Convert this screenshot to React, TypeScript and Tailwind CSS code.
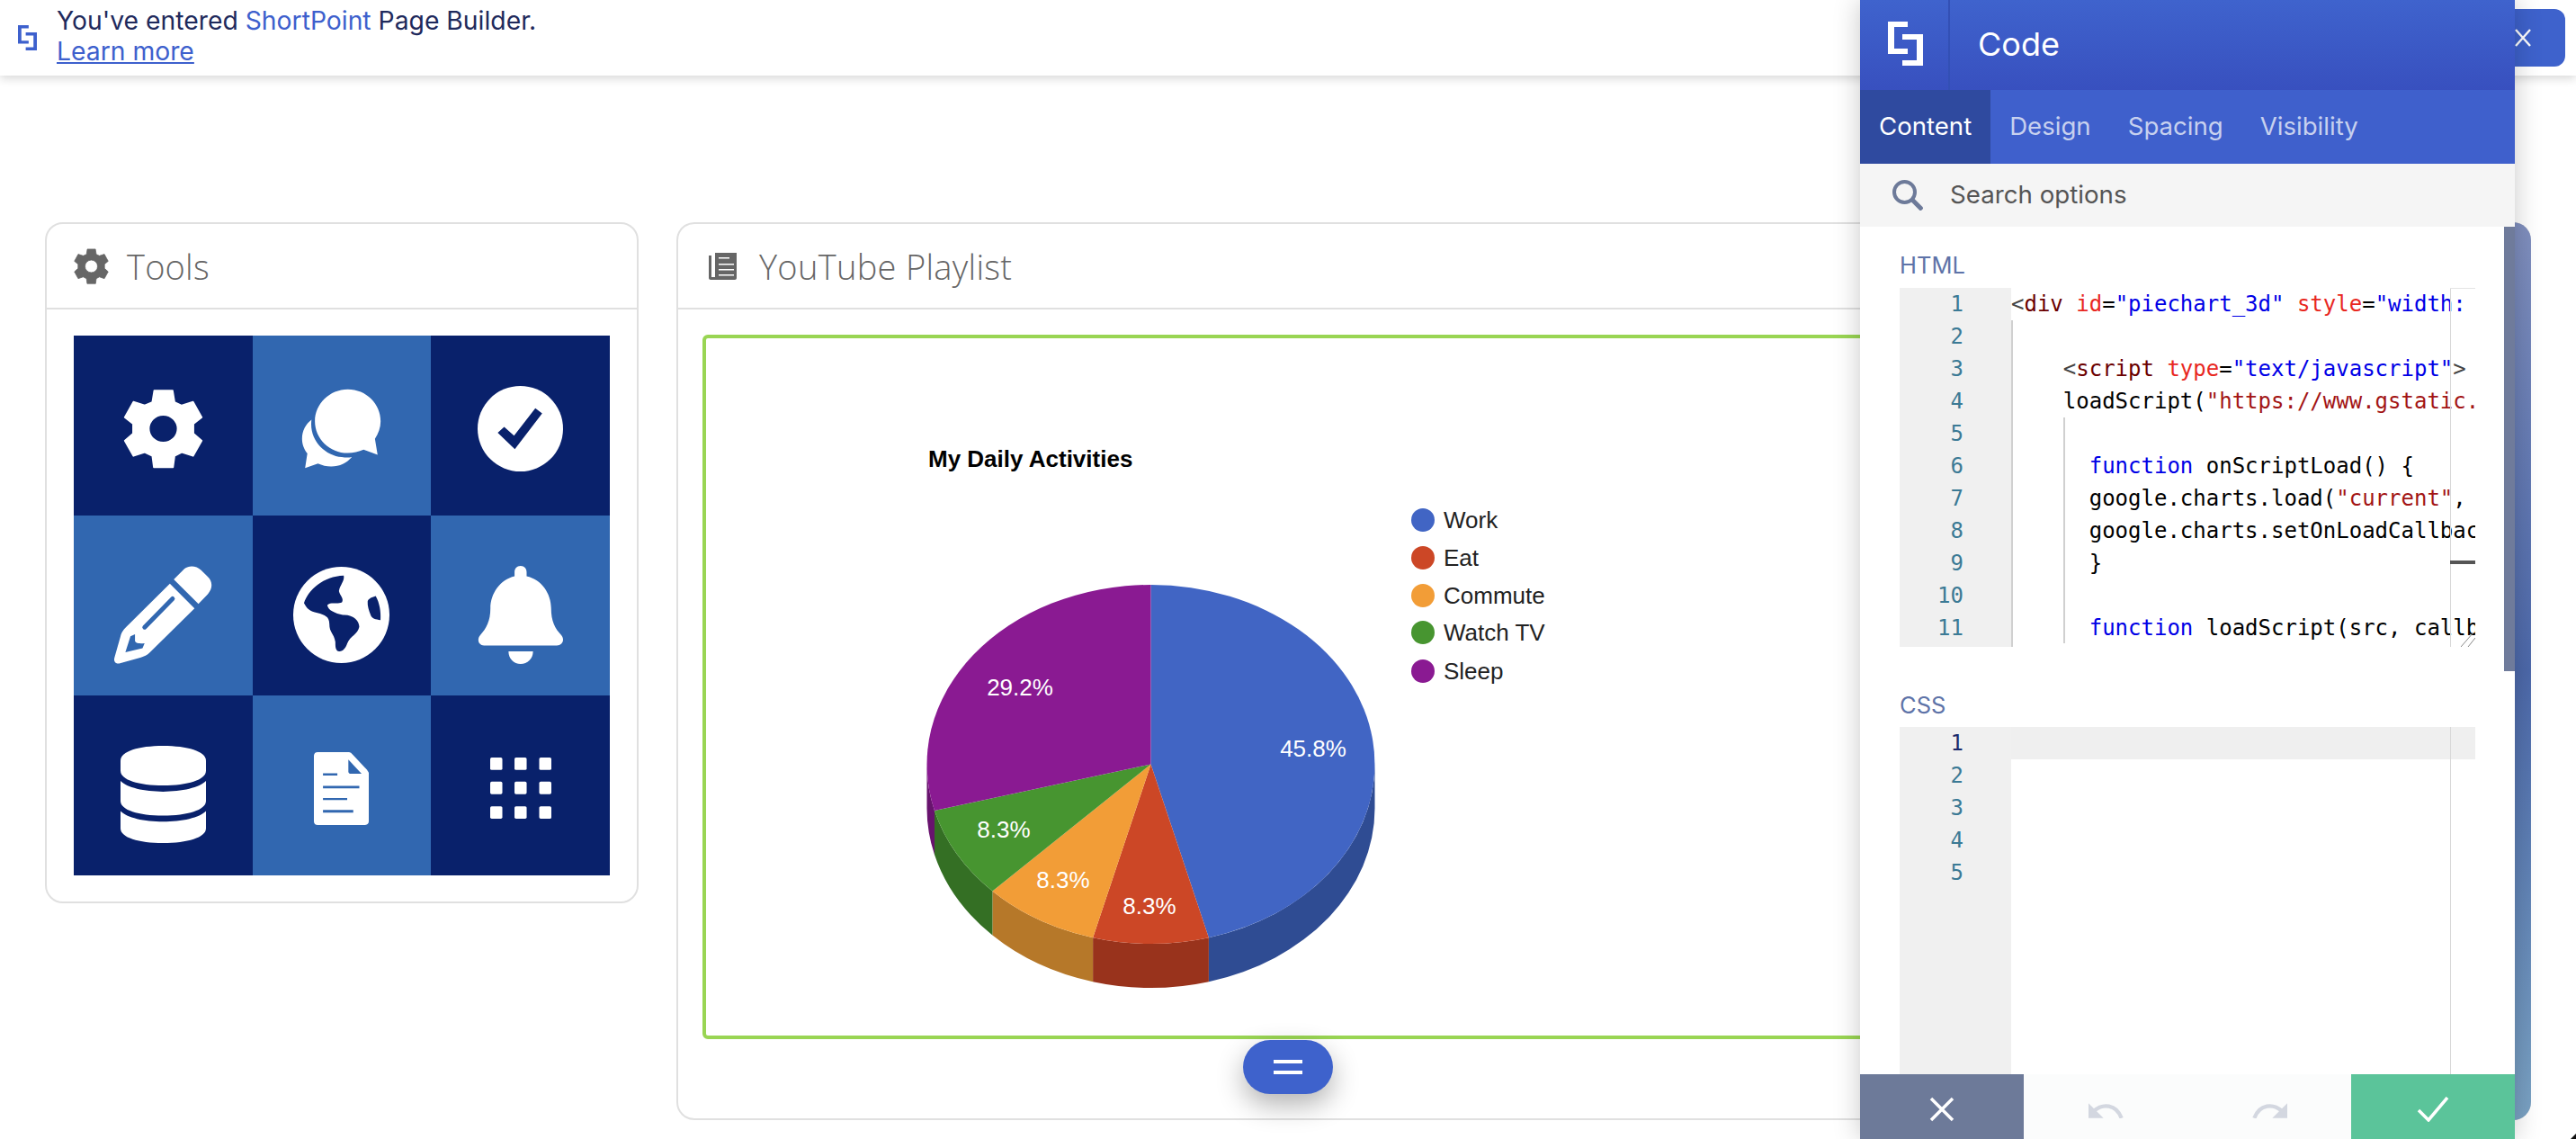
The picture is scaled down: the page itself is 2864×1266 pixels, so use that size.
const INTER = "font-['Inter',sans-serif]"
const MONO = "font-['DejaVu_Sans_Mono',monospace]"

// gear shared by the Tools title and the first tile
function Gear({ className }: { className: string }) {
  return (
    <svg viewBox="205 175 212 220" preserveAspectRatio="none" className={className} fill="currentColor">
      <path
        fillRule="evenodd"
        stroke="currentColor"
        strokeWidth="4"
        strokeLinejoin="round"
        d="M287 180H336L341 212L360 221L390 211L413 254L391 272V298L413 318L390 360L360 350L341 360L337 391H286L282 360L262 350L232 360L209 318L231 298V272L209 254L232 211L262 221L282 212ZM311 247A38 38 0 1 0 311 323A38 38 0 1 0 311 247Z"
      />
    </svg>
  )
}

function Logo({ className }: { className: string }) {
  return (
    <svg viewBox="0 0 39 49" preserveAspectRatio="none" className={className} fill="currentColor">
      <path d="M0 0H22V6H7V30H22V36H0Z" />
      <path d="M16 14H39V49H16V43H32V20H16Z" />
    </svg>
  )
}

function Chat() {
  return (
    <svg viewBox="678 175 212 219" preserveAspectRatio="none" className="w-[89px] h-[89px]" fill="currentColor">
      <path d="M801 177C850 177 888 217 888 264C888 282 882 298 873 312L880 356L843 342C830 348 816 351 801 351C753 351 714 312 714 264C714 217 753 177 801 177Z" />
      <path d="M705 260C690 272 680 290 680 312C680 328 686 342 694 352L688 392L722 380C733 385 745 388 757 388C780 388 798 378 812 362C805 364 795 364 785 362C740 358 698 315 705 260Z" />
    </svg>
  )
}

function CheckCircle() {
  return (
    <svg viewBox="1142 168 225 234" preserveAspectRatio="none" className="w-[95px] h-[95px]">
      <ellipse cx="1254.5" cy="285" rx="112.5" ry="117" fill="#fff" />
      <path d="M1195 296L1212 280L1238 304L1294 229L1312 243L1240 341Z" fill="#09216b" />
    </svg>
  )
}

function Pencil() {
  return (
    <svg viewBox="48 38 332 332" className="w-[111px] h-[111px]" fill="#fff">
      <path d="M249 86L285 50C300 38 325 40 340 55L362 77C378 93 380 115 362 135L331 167Z" />
      <path d="M236 100L318 182L170 328C160 338 150 342 140 345L70 365C55 368 48 358 52 345L72 275C75 260 85 250 95 240Z" />
      <path d="M245 150L152 245" stroke="#3167b0" strokeWidth="15" strokeLinecap="round" />
      <path d="M88 328L105 275L120 268V290C122 297 130 300 152 298L145 315Z" fill="#3167b0" />
    </svg>
  )
}

function Globe() {
  return (
    <svg viewBox="649 44 322 322" className="w-[107px] h-[107px]">
      <circle cx="810" cy="205" r="161" fill="#fff" />
      <path
        fill="#09216b"
        d="M818 73C822 90 805 105 802 125C805 140 820 150 812 163C795 170 775 160 763 172C765 190 790 200 815 205C850 203 870 225 870 245C865 270 840 275 830 300C825 315 815 328 803 327C790 325 790 310 790 295C785 265 770 265 770 235C770 210 755 205 730 198C705 193 695 185 685 165C700 120 750 75 818 73Z"
      />
      <path fill="#09216b" d="M925 142C938 165 943 195 941 222C925 220 912 218 908 205C902 190 897 175 898 160C900 150 915 145 925 142Z" />
    </svg>
  )
}

function Bell() {
  return (
    <svg viewBox="1140 660 229 266" preserveAspectRatio="none" className="w-[96px] h-[109px]" fill="#fff">
      <path d="M1254 660C1264 660 1270 667 1270 677V688C1310 697 1335 735 1335 775C1335 810 1345 830 1362 848C1372 860 1365 876 1350 876H1157C1143 876 1137 860 1147 848C1163 830 1174 810 1174 775C1174 735 1200 697 1238 688V677C1238 667 1244 660 1254 660Z" />
      <path d="M1222 892H1287C1287 912 1272 926 1254 926C1236 926 1222 912 1222 892Z" />
    </svg>
  )
}

function Database() {
  return (
    <svg viewBox="199 1150 225 265" preserveAspectRatio="none" className="w-[95px] h-[108px]" fill="#fff">
      <path d="M311 1150C375 1150 424 1165 424 1190V1218C424 1243 375 1258 311 1258C247 1258 199 1243 199 1218V1190C199 1165 247 1150 311 1150Z" />
      <path d="M199 1246C215 1264 262 1275 311 1275C360 1275 408 1264 424 1246V1300C424 1325 375 1340 311 1340C247 1340 199 1325 199 1300Z" />
      <path d="M199 1328C215 1346 262 1357 311 1357C360 1357 408 1346 424 1328V1375C424 1400 375 1415 311 1415C247 1415 199 1400 199 1375Z" />
    </svg>
  )
}

function Doc() {
  return (
    <svg viewBox="712 1166 145 199" preserveAspectRatio="none" className="w-[61px] h-[81px]">
      <path fill="#fff" d="M722 1166H805L810 1168L852 1214L857 1222V1355C857 1361 852 1365 846 1365H722C716 1365 712 1361 712 1355V1176C712 1170 716 1166 722 1166Z" />
      <path fill="#3167b0" d="M803 1186L838 1225H810C805 1225 803 1222 803 1218Z" />
      <path fill="#3167b0" d="M736 1224H774V1230H736ZM736 1258H832V1265H736ZM736 1291H800V1297H736ZM736 1324H816V1331H736Z" />
    </svg>
  )
}

function Dots() {
  const xs = [1174, 1238, 1303]
  const ys = [1182, 1248, 1315]
  return (
    <svg viewBox="1174 1182 161 167" preserveAspectRatio="none" className="w-[68px] h-[68px]" fill="#fff">
      {ys.map((y) => xs.map((x) => <rect key={`${x}-${y}`} x={x} y={y} width="32" height="34" rx="4" />))}
    </svg>
  )
}

const tiles = [
  { bg: 'bg-[#09216b]', pad: 'pt-[6px]', icon: <Gear className="w-[89px] h-[89px]" /> },
  { bg: 'bg-[#3167b0]', pad: 'pt-[6px]', icon: <Chat /> },
  { bg: 'bg-[#09216b]', pad: 'pt-[6px]', icon: <CheckCircle /> },
  { bg: 'bg-[#3167b0]', pad: 'pt-[20px]', icon: <Pencil /> },
  { bg: 'bg-[#09216b]', pad: 'pt-[20px]', icon: <Globe /> },
  { bg: 'bg-[#3167b0]', pad: 'pt-[20px]', icon: <Bell /> },
  { bg: 'bg-[#09216b]', pad: 'pt-[20px]', icon: <Database /> },
  { bg: 'bg-[#3167b0]', pad: 'pt-[6px]', icon: <Doc /> },
  { bg: 'bg-[#09216b]', pad: 'pt-[6px]', icon: <Dots /> },
]

function PieChart() {
  const sans = 'Liberation Sans, Arial, sans-serif'
  const legend = [
    ['Work', '#4165c4', 578],
    ['Eat', '#cc4726', 620],
    ['Commute', '#f29d37', 662],
    ['Watch TV', '#479530', 703],
    ['Sleep', '#8a1a92', 746],
  ] as const
  const labels = [
    ['45.8%', 1460, 841],
    ['29.2%', 1134, 773],
    ['8.3%', 1116, 931],
    ['8.3%', 1182, 987],
    ['8.3%', 1278, 1016],
  ] as const
  return (
    <svg viewBox="785 376 1000 775" className="w-[1000px] h-[775px]">
      <path fill="#2f4c93" d="M1528.5 849.5A249 199.5 0 0 1 1343.9 1042.2V1091.2A249 199.5 0 0 0 1528.5 898.5Z" />
      <path fill="#99331c" d="M1343.9 1042.2A249 199.5 0 0 1 1215.1 1042.2V1091.2A249 199.5 0 0 0 1343.9 1091.2Z" />
      <path fill="#b67829" d="M1215.1 1042.2A249 199.5 0 0 1 1103.4 990.5V1039.5A249 199.5 0 0 0 1215.1 1091.2Z" />
      <path fill="#346f24" d="M1103.4 990.5A249 199.5 0 0 1 1039 901.1V950.1A249 199.5 0 0 0 1103.4 1039.5Z" />
      <path fill="#68136e" d="M1039 901.1A249 199.5 0 0 1 1030.5 849.5V898.5A249 199.5 0 0 0 1039 950.1Z" />
      <path fill="#4165c4" d="M1279.5 849.5V650A249 199.5 0 0 1 1343.9 1042.2Z" />
      <path fill="#cc4726" d="M1279.5 849.5L1343.9 1042.2A249 199.5 0 0 1 1215.1 1042.2Z" />
      <path fill="#f29d37" d="M1279.5 849.5L1215.1 1042.2A249 199.5 0 0 1 1103.4 990.5Z" />
      <path fill="#479530" d="M1279.5 849.5L1103.4 990.5A249 199.5 0 0 1 1039 901.1Z" />
      <path fill="#8a1a92" d="M1279.5 849.5L1039 901.1A249 199.5 0 0 1 1279.5 650Z" />
      <text x="1032" y="519" fontFamily={sans} fontSize="26" fontWeight="700" fill="#000">
        My Daily Activities
      </text>
      {legend.map(([name, color, y]) => (
        <g key={name}>
          <circle cx="1582" cy={y} r="13" fill={color} />
          <text x="1605" y={y + 9} fontFamily={sans} fontSize="26" fill="#222">
            {name}
          </text>
        </g>
      ))}
      {labels.map(([text, x, y], i) => (
        <text key={i} x={x} y={y} textAnchor="middle" fontFamily={sans} fontSize="26" fill="#fff">
          {text}
        </text>
      ))}
    </svg>
  )
}

const K = 'text-[#0000e6]'
const S = 'text-[#a31515]'
const T = 'text-[#6b0000]'
const A = 'text-[#e8281f]'
const htmlLines: [string, string][][] = [
  [['<', 'text-[#444]'], ['div', T], [' ', ''], ['id', A], ['=', ''], ['"piechart_3d"', K], [' ', ''], ['style', A], ['=', ''], ['"width: 900px"', K]],
  [],
  [['    <', 'text-[#444]'], ['script', T], [' ', ''], ['type', A], ['=', ''], ['"text/javascript"', K], ['>', 'text-[#444]']],
  [['    loadScript(', ''], ['"https://www.gstatic.com/charts/loader.js"', S]],
  [],
  [['      ', ''], ['function', K], [' onScriptLoad() {', '']],
  [['      google.charts.load(', ''], ['"current"', S], [', {packages:', '']],
  [['      google.charts.setOnLoadCallback(drawChart);', '']],
  [['      }', '']],
  [],
  [['      ', ''], ['function', K], [' loadScript(src, callback) {', '']],
]

function Editor({ lines, count, active }: { lines: [string, string][][]; count: number; active?: boolean }) {
  return (
    <div className={`relative flex w-[640px] text-[24px] leading-[36px] ${MONO} ${active ? 'h-[500px]' : 'h-[399px]'}`}>
      <div className="w-[124px] bg-[#f0f0f0] pr-[53px] text-right text-[#3b7a95] shrink-0">
        {Array.from({ length: count }, (_, i) => (
          <div key={i} className={`h-[36px] ${active && i === 0 ? 'text-[#1b2a6b]' : ''}`}>
            {i + 1}
          </div>
        ))}
      </div>
      <div className="relative flex-1 overflow-hidden text-black">
        {active && <div className="h-[36px] bg-[#efefef]" />}
        {!active && <div className="absolute left-0 top-[36px] bottom-0 w-[2px] bg-[#d0d0d0]" />}
        {!active && <div className="absolute left-[58px] top-[144px] bottom-[4px] w-[2px] bg-[#d0d0d0]" />}
        {lines.map((line, i) => (
          <div key={i} className="h-[36px] whitespace-pre">
            {line.map(([text, color], j) => (
              <span key={j} className={color}>
                {text}
              </span>
            ))}
          </div>
        ))}
        <div className="absolute left-[488px] top-0 bottom-0 w-[1px] bg-[#d8d8d8]" />
        {!active && <div className="absolute left-[488px] top-0 right-0 h-[1px] bg-[#e4e4e4]" />}
        {!active && <div className="absolute left-[488px] top-[303px] right-0 h-[4px] bg-[#555]" />}
        {!active && (
          <svg viewBox="0 0 16 16" className="absolute right-0 bottom-0 w-[16px] h-[16px]" stroke="#888" fill="none">
            <path d="M0 16L14 0M8 16L16 6" />
          </svg>
        )}
      </div>
    </div>
  )
}

function SidePanel() {
  return (
    <div className={`absolute top-0 left-[2068px] flex h-[1266px] w-[728px] flex-col bg-white shadow-[0_0_28px_rgba(0,0,0,0.22)] ${INTER}`}>
      <div className="flex h-[100px] shrink-0 items-center bg-gradient-to-b from-[#3f63cd] to-[#3850bf] text-white">
        <div className="flex h-full w-[100px] items-center pl-[31px] border-r-2 border-[#3350b5]">
          <Logo className="w-[39px] h-[49px] text-white mb-[4px]" />
        </div>
        <span className="pl-[31px] pb-[2px] text-[36px]">Code</span>
      </div>
      <div className="flex h-[82px] shrink-0 bg-[#3f60cc] text-[27.6px] text-[#c7d1ef]">
        <div className="flex items-center bg-[#2f4a9f] px-[21px] text-white">Content</div>
        <div className="flex items-center pl-[21px]">Design</div>
        <div className="flex items-center pl-[41px]">Spacing</div>
        <div className="flex items-center pl-[41px]">Visibility</div>
      </div>
      <div className="flex h-[70px] shrink-0 items-center bg-[#f5f5f5] pl-[36px] text-[27.7px] text-[#555]">
        <svg viewBox="0 0 34 34" className="w-[34px] h-[34px]" fill="none" stroke="#6d7a99">
          <circle cx="13.5" cy="13.5" r="11.5" strokeWidth="4" />
          <path d="M22 22L33 33" strokeWidth="5" />
        </svg>
        <span className="pl-[30px]">Search options</span>
      </div>
      <div className="relative flex-1 overflow-hidden pl-[44px] pt-[25px]">
        <div className="text-[25.5px] leading-[36px] text-[#5e73a8] mb-[7px]">HTML</div>
        <Editor lines={htmlLines} count={11} />
        <div className="mt-[47px] text-[25.5px] leading-[36px] text-[#5e73a8] mb-[6px]">CSS</div>
        <Editor lines={[]} count={5} active />
        <div className="absolute right-0 top-0 h-[494px] w-[12px] bg-[#6f7b9b]" />
      </div>
      <div className="flex h-[72px] shrink-0 bg-[#fbfcfc]">
        <button className="flex w-[182px] items-center justify-center bg-[#6d7a99] pt-[6px]">
          <svg viewBox="0 0 28 28" className="w-[28px] h-[28px]" stroke="#fff" strokeWidth="3.5">
            <path d="M2 2L26 26M26 2L2 26" />
          </svg>
        </button>
        <div className="flex flex-1 items-center justify-around pt-[9px]">
          <svg viewBox="63 108 117 50" className="w-[39px] h-[17px]">
            <path d="M63 108L113 158H63Z" fill="#d3d7e0" />
            <path d="M80 135C110 108 155 110 173 158" fill="none" stroke="#d3d7e0" strokeWidth="13" />
          </svg>
          <svg viewBox="63 108 117 50" className="w-[39px] h-[17px] -scale-x-100">
            <path d="M63 108L113 158H63Z" fill="#d3d7e0" />
            <path d="M80 135C110 108 155 110 173 158" fill="none" stroke="#d3d7e0" strokeWidth="13" />
          </svg>
        </div>
        <button className="flex w-[182px] items-center justify-center bg-[#5bc49a] pt-[6px]">
          <svg viewBox="0 0 36 28" className="w-[36px] h-[28px]" fill="none" stroke="#fff" strokeWidth="3.5">
            <path d="M2 15L13 26L34 1" />
          </svg>
        </button>
      </div>
    </div>
  )
}

export default function App() {
  return (
    <div className={`relative w-[2864px] h-[1266px] overflow-hidden bg-white ${INTER}`}>
      <header className="flex h-[84px] items-center bg-white pl-[20px] shadow-[0_3px_10px_rgba(0,0,0,0.16)]">
        <Logo className="w-[21px] h-[28px] text-[#3d60cd]" />
        <div className="pl-[22px] pb-[4px] text-[28.3px] leading-[34px] text-[#1f2a5c]">
          <div>
            You've entered <span className="text-[#3d60cd]">ShortPoint</span> Page Builder.
          </div>
          <a className="text-[#3d60cd] underline">Learn more</a>
        </div>
        <div className="ml-auto mr-[12px] flex h-[64px] w-[72px] items-center rounded-[12px] bg-[#3e62cc] pl-[16px]">
          <svg viewBox="0 0 18 20" className="w-[18px] h-[20px]" stroke="#fff" strokeWidth="2.4">
            <path d="M1 1L17 19M17 1L1 19" />
          </svg>
        </div>
      </header>

      <main className="flex items-start gap-[42px] pl-[50px] pt-[163px] font-['Open_Sans',sans-serif] text-[#666]">
        <section className="w-[660px] rounded-[20px] border-2 border-[#e0e0e0]">
          <div className="flex h-[95px] items-center border-b-2 border-[#e0e0e0] pl-[30px]">
            <Gear className="w-[39px] h-[40px] text-[#666]" />
            <span className="pl-[20px] pt-[2px] text-[38px] font-light tracking-[0.2px]">Tools</span>
          </div>
          <div className="p-[30px] pt-[29px] pb-[29px]">
            <div className="grid h-[600px] grid-cols-3 grid-rows-3 text-white">
              {tiles.map((t, i) => (
                <div key={i} className={`flex items-center justify-center ${t.bg} ${t.pad}`}>
                  {t.icon}
                </div>
              ))}
            </div>
          </div>
        </section>

        <section className="relative h-[998px] w-[2062px] rounded-[20px] border-2 border-[#e0e0e0]">
          <div className="flex h-[95px] items-center border-b-2 border-[#e0e0e0] pl-[34px]">
            <svg viewBox="0 0 31 30" className="w-[31px] h-[30px]" fill="#666">
              <path d="M7 0H31V28C31 29 30 30 29 30H2C1 30 0 29 0 28V3H3V27H7Z" />
              <path d="M11 5H23V6.5H11ZM11 12H28V13.5H11ZM11 18H28V19.5H11ZM11 24H28V25.5H11Z" fill="#fff" />
            </svg>
            <span className="pl-[25px] pt-[2px] text-[38px] font-light tracking-[0.3px]">YouTube Playlist</span>
          </div>
          <div className="pl-[27px] pr-[27px] pt-[28px]">
            <div className="h-[783px] rounded-[6px] border-4 border-[#99d553]">
              <PieChart />
            </div>
          </div>
          <div className="absolute -right-[2px] -top-[2px] -bottom-[2px] w-[40px] rounded-r-[20px] bg-gradient-to-b from-[#8190bf] via-[#4d69ab] to-[#7ba3c4]" />
        </section>
      </main>

      <div className="absolute left-[1382px] top-[1156px] flex h-[60px] w-[100px] flex-col items-center justify-center gap-[8px] rounded-[30px] bg-[#3e62cc] shadow-[0_12px_30px_rgba(0,0,0,0.3)]">
        <div className="h-[4px] w-[32px] bg-white" />
        <div className="h-[4px] w-[32px] bg-white" />
      </div>

      <SidePanel />

      <svg viewBox="0 0 6 6" className="absolute left-[2858px] top-[1260px] w-[6px] h-[6px]">
        <path d="M0 6L6 0V6Z" fill="#111" />
      </svg>
    </div>
  )
}
